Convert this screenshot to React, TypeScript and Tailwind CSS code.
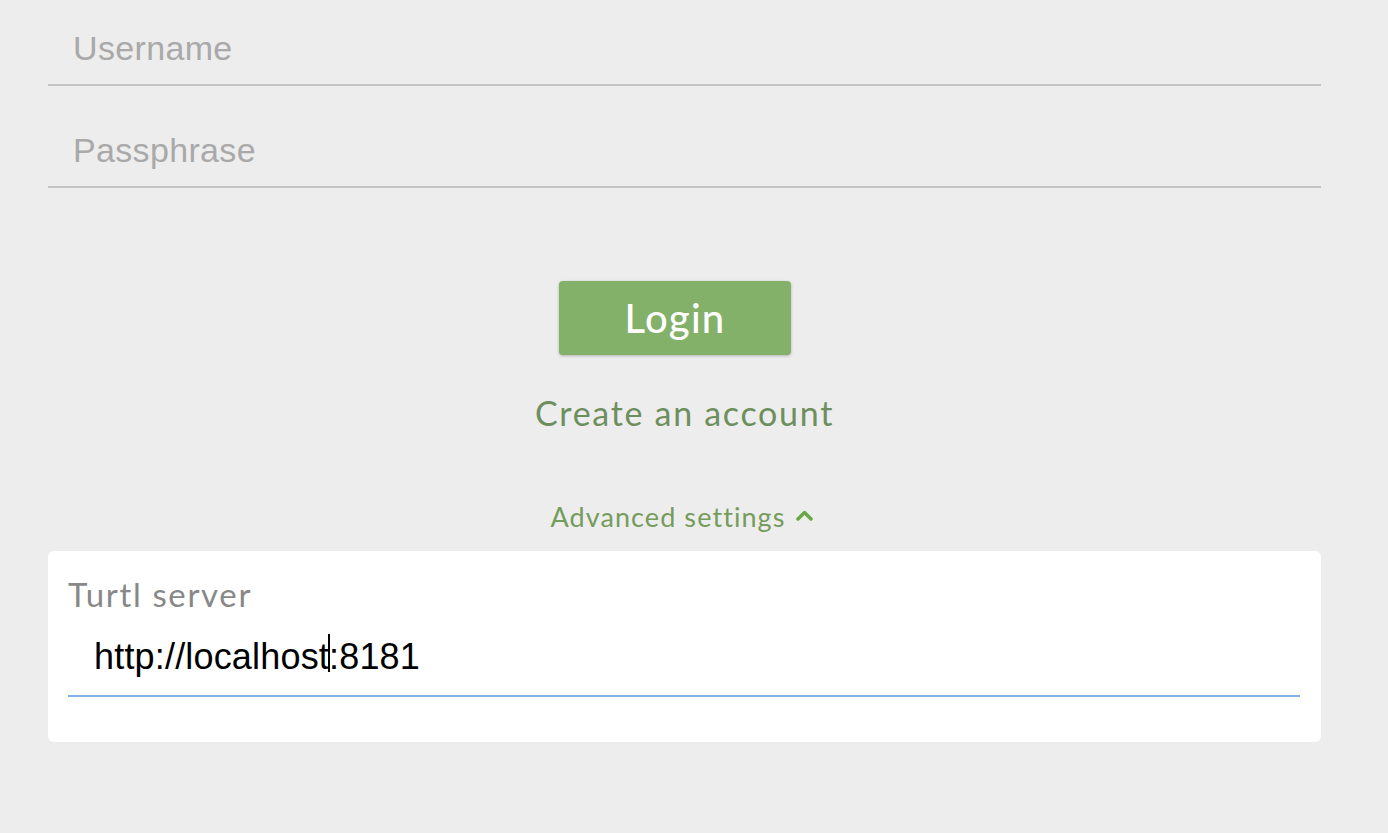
const sans = "font-['Lato',_'Noto_Sans',_sans-serif]"
const helv = "font-['Liberation_Sans',_Arial,_sans-serif]"

function Field({ placeholder }: { placeholder: string }) {
  return (
    <div className="border-b-2 border-[#c4c4c4] pt-[28px] pb-[16px] pl-[25px]">
      <div className={`${helv} text-[34px] leading-[40px] tracking-[0.01em] text-[#a9a9a9]`}>{placeholder}</div>
    </div>
  )
}

export default function App() {
  return (
    <div className="min-h-screen bg-[#ededed] pl-[48px] pr-[67px]">
      {/* Credentials */}
      <div className="flex flex-col gap-[16px]">
        <Field placeholder="Username" />
        <Field placeholder="Passphrase" />
      </div>

      {/* Actions */}
      <div className="flex flex-col items-center">
        <button
          className={`${sans} mt-[93px] mr-[19px] h-[74px] w-[232px] rounded-[4px] bg-[#83b169] text-[40px] font-medium tracking-[0.03em] text-white shadow-[0_1px_3px_rgba(0,0,0,0.25)]`}
        >
          Login
        </button>
        <div className={`${sans} mt-[38px] text-[34px] leading-[40px] tracking-[0.05em] text-[#6d8f5d]`}>
          Create an account
        </div>
        <div className={`${sans} mt-[68px] mr-[6px] flex items-center gap-[10px] text-[27px] leading-[32px] tracking-[0.04em] text-[#759c5c]`}>
          <span>Advanced settings</span>
          <svg width="17" height="12" viewBox="0 0 17 12" className="mt-[-4px]">
            <path d="M2 10 L8.5 3.5 L15 10" fill="none" stroke="#68a845" strokeWidth="3.5" strokeLinecap="round" strokeLinejoin="round" />
          </svg>
        </div>
      </div>

      {/* Advanced panel */}
      <div className="mt-[18px] rounded-[6px] bg-white pt-[23px] pb-[45px] pl-[20px] pr-[21px]">
        <div className={`${sans} text-[33px] leading-[40px] tracking-[0.05em] text-[#888888]`}>Turtl server</div>
        <div className="mt-[23px] border-b-2 border-[#82b2e6] pb-[18px] pl-[26px]">
          <div className={`${helv} text-[36px] leading-[40px] tracking-[0.005em] text-black`}>
            http://localhost
            <span className="relative">
              <span className="absolute left-[-1px] top-[-2px] h-[38px] w-[2px] bg-black" />
            </span>
            :8181
          </div>
        </div>
      </div>
    </div>
  )
}
